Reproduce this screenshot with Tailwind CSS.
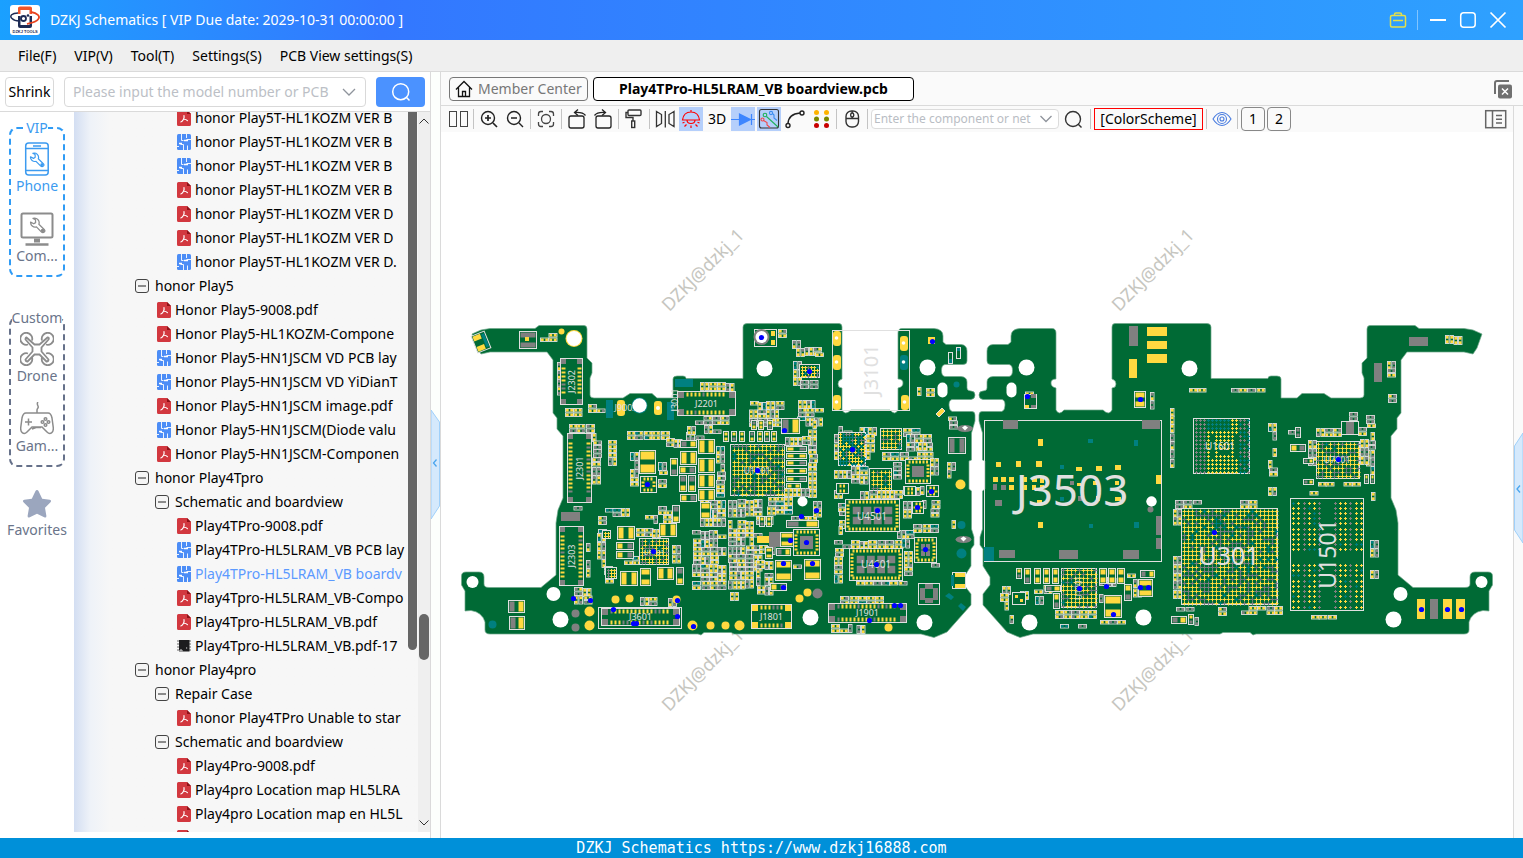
<!DOCTYPE html>
<html lang="en">
<head>
    <meta charset="UTF-8" />
    <meta name="viewport" content="width=device-width, initial-scale=1.0" />
    <title>DZKJ Schematics</title>
    <script src="https://cdn.jsdelivr.net/npm/@tailwindcss/browser@4"></script>
</head>
<body class="h-screen flex flex-col overflow-hidden bg-white text-black text-sm font-['Noto_Sans','Open_Sans',sans-serif]">

<!-- shared icons -->
<svg class="hidden">
    <symbol id="i-pdf" viewBox="0 0 14 16">
        <path d="M1.500 0H10l4 4v10.500a1.500 1.500 0 0 1-1.500 1.500h-11A1.500 1.500 0 0 1 0 14.500v-13A1.500 1.500 0 0 1 1.500 0z" fill="#d2383f"/>
        <path d="M10 0l4 4h-4z" fill="#8e1218"/>
        <path d="M7 5.500c.3 1.700.2 2.600-.6 4C5.500 11 4.800 11.800 3.800 12M6.400 9.300c1.600-.2 3 .2 4 1.300" fill="none" stroke="#fff" stroke-width="1.200" stroke-linecap="round"/>
    </symbol>
    <symbol id="i-pcb" viewBox="0 0 14 16">
        <rect width="14" height="16" rx="1.500" fill="#4c8df6"/>
        <path d="M4.500 0v6.500h2M9.500 0v4M14 5.500h-4.500M3.500 10.500h3V16M10.500 16v-4.500M0 12.500h2" fill="none" stroke="#fff" stroke-width=".9"/>
        <path d="M7 6.500h4M2 9.500h3" fill="none" stroke="#fff" stroke-width="1.500"/>
    </symbol>
    <symbol id="i-chip" viewBox="0 0 14 16">
        <path d="M0 3h14M0 6h14M0 9h14M0 12h14" stroke="#999" stroke-width="1.500"/>
        <rect x="2" y="2" width="10.500" height="11.500" fill="#1d1d1f"/>
        <path d="M3 13.500v-1.500h2v1.500M9 10h1.200" stroke="#ddd" fill="none"/>
    </symbol>
    <symbol id="i-minus" viewBox="0 0 14 14">
        <rect x=".5" y=".5" width="13" height="13" rx="2.500" fill="#f5f5f5" stroke="#444"/>
        <path d="M3 7h8" stroke="#222"/>
    </symbol>
    <symbol id="i-wrench" viewBox="0 0 16 16">
        <path d="M1.500 4.800l3 1.600 1.700-1.100L6.100 2.600 3.800 1.300a4.300 4.300 0 0 1 5.500 5.500l5 4.900a1.700 1.700 0 0 1-2.500 2.500L7 9.300A4.300 4.300 0 0 1 1.500 4.800z" fill="none" stroke="currentColor" stroke-width="1.200" stroke-linejoin="round"/>
        <circle cx="12.800" cy="12.800" r=".7" fill="currentColor"/>
    </symbol>
</svg>

<header class="h-10 shrink-0 flex items-center pl-2.5 pr-[15px] text-white bg-gradient-to-r from-[#1aa0ff] via-[#3377ff] via-25% to-[#2ea1ff]">
    <svg class="size-[30px] mr-2.5" viewBox="0 0 30 30">
        <rect width="30" height="30" rx="3" fill="#fff"/>
        <path d="M8 3q0-1.500 2-1.500h10q2 0 2 1.500v6H8z" fill="#f0552a"/>
        <path d="M8 11h14v10q0 2-2 2H10q-2 0-2-2z" fill="#1d2b55"/>
        <rect x="10.500" y="5" width="9" height="15" fill="#fff"/>
        <path d="M8 8C2 8-1 11 2 13.500c2 2 5 2.500 7 2.500" fill="none" stroke="#1d2b55" stroke-width="1.500"/>
        <path d="M21 7c6 1 10 4 7 7.500-2 2.500-7 3.500-11 4.500" fill="none" stroke="#e8431f" stroke-width="1.800"/>
        <circle cx="13.500" cy="13.500" r="2.500" fill="none" stroke="#1d2b55" stroke-width="1.800"/>
        <circle cx="18" cy="10.500" r="1.300" fill="#1d2b55"/>
        <text x="2.500" y="28.300" font-size="4" font-weight="bold" fill="#1d2b55" font-family="Liberation Sans">DZKJ TOOLS</text>
    </svg>
    <h1>DZKJ Schematics [ VIP Due date: 2029-10-31 00:00:00 ]</h1>
    <div class="ml-auto flex items-center">
        <button aria-label="Toolbox">
            <svg class="size-5" viewBox="0 0 20 20" fill="none" stroke="#e5e04a" stroke-width="1.500"><rect x="2.500" y="5.500" width="15" height="11.500" rx="1.500"/><path d="M6.500 5.500v-1q0-1.500 1.500-1.500h4q1.500 0 1.500 1.500v1M5 10.500h10"/></svg>
        </button>
        <span class="w-px h-5 bg-white/40 ml-[9px] mr-2.5"></span>
        <button class="mr-2.5" aria-label="Minimize">
            <svg class="size-5" viewBox="0 0 20 20" stroke="#fff" stroke-width="2"><path d="M2 10h16"/></svg>
        </button>
        <button class="mr-2.5" aria-label="Maximize">
            <svg class="size-5" viewBox="0 0 20 20" fill="none" stroke="#fff" stroke-width="1.500"><rect x="2.700" y="2.700" width="14.500" height="14.500" rx="3"/></svg>
        </button>
        <button aria-label="Close">
            <svg class="size-5" viewBox="0 0 20 20" stroke="#fff" stroke-width="1.700"><path d="M2.500 2.500l15 15M17.500 2.500l-15 15"/></svg>
        </button>
    </div>
</header>

<nav class="h-8 shrink-0 flex items-center gap-[18px] pl-[18px] bg-[#efefef] border-b border-[#dadada]">
    <button>File(F)</button>
    <button>VIP(V)</button>
    <button>Tool(T)</button>
    <button>Settings(S)</button>
    <button>PCB View settings(S)</button>
</nav>

<div class="flex-1 min-h-0 flex">

    <!-- left pane -->
    <aside class="w-[431px] shrink-0 flex flex-col border-r border-[#dadada]">
        <div class="h-10 shrink-0 flex items-center pl-[5px] border-b border-[#dadada]">
            <button class="h-[30px] w-[49px] border border-[#d9d9d9] rounded-sm">Shrink</button>
            <label class="ml-2.5 h-[30px] w-[302px] flex items-center border border-[#d9d9d9] rounded-sm pl-2 pr-2">
                <input type="text" aria-label="Model number" placeholder="Please input the model number or PCB" class="flex-1 min-w-0 outline-none placeholder:text-[#bcbfc6]" />
                <svg class="w-4 h-4 ml-1.5" viewBox="0 0 16 16" fill="none" stroke="#8f949c" stroke-width="1.300"><path d="M2 5l6 6 6-6"/></svg>
            </label>
            <button class="ml-2.5 h-[30px] w-[49px] flex items-center justify-center rounded-sm bg-[#4b92ff]" aria-label="Search">
                <svg class="size-5" viewBox="0 0 20 20" fill="none" stroke="#fff" stroke-width="1.500"><circle cx="9.700" cy="9.700" r="8"/><path d="M15.300 15.300l3.200 3.200"/></svg>
            </button>
        </div>

        <div class="flex-1 min-h-0 flex pb-1.5">
            <div class="w-[74px] shrink-0 flex flex-col items-center pt-1.5 text-[#6a748a]">
                <fieldset class="w-14 h-[159px] border-2 border-dashed border-[#2f9bf5] rounded-lg flex flex-col items-center">
                    <legend class="mx-auto leading-5 text-[#3c9bf0]">VIP</legend>
                    <button class="mt-1 flex flex-col items-center text-[#3c9bf0]">
                        <svg class="size-[34px]" viewBox="0 0 34 34" fill="none" stroke="currentColor" stroke-width="1.500"><rect x="5.700" y="1" width="22.500" height="32" rx="3"/><path d="M5.700 6.500h22.500M5.700 28.500h22.500M13 4h8"/><use href="#i-wrench" x="9" y="10" width="16" height="16"/></svg>
                        <span class="leading-5">Phone</span>
                    </button>
                    <button class="mt-4 flex flex-col items-center">
                        <svg class="size-[34px] text-[#8c8c8c]" viewBox="0 0 34 34" fill="none" stroke="currentColor" stroke-width="2"><rect x="1.500" y="1.500" width="31" height="24" rx="1.500"/><path d="M14 28.500h6" stroke-width="4"/><path d="M5.500 32.500h23" stroke-width="2.500"/><use href="#i-wrench" x="9" y="5" width="17" height="17"/></svg>
                        <span class="leading-5">Com...</span>
                    </button>
                </fieldset>
                <fieldset class="mt-[31px] w-14 h-[159px] border-2 border-dashed border-[#66718a] rounded-lg flex flex-col items-center">
                    <legend class="mx-auto leading-5">Custom</legend>
                    <button class="mt-1 flex flex-col items-center">
                        <svg class="size-[34px] text-[#8c8c8c]" viewBox="0 0 34 34" fill="none" stroke="currentColor" stroke-width="1.800"><path d="M12 8.500A6 6 0 1 0 8 12.500M22 8.500a6 6 0 1 1 4 4M12 25.500A6 6 0 1 1 8 21.500M22 25.500a6 6 0 1 0 4-4M6.500 5.500l8 7h5l8-7q2 0 1 2l-7 8v4l7 8q0 2-2 2l-7-7h-5l-7 7q-2 0-2-2l7-8v-4l-7-8q0-2 1-2z"/></svg>
                        <span class="leading-5">Drone</span>
                    </button>
                    <button class="mt-4 flex flex-col items-center">
                        <svg class="size-[34px] text-[#8c8c8c]" viewBox="0 0 34 34" fill="none" stroke="currentColor" stroke-width="1.500"><path d="M17 11V8c0-2 2-2 1-4s-1-3 0-4M6 11h22q3 0 4 5l1.200 9c.8 6-3.200 8-6.200 5l-5-5H12l-5 5c-3 3-7 1-6.200-5L2 16q1-5 4-5zM8.500 16.500v7M5 20h7M12 27l4-1.500h5" /><circle cx="25.500" cy="17" r="1.300"/><circle cx="25.500" cy="23" r="1.300"/><circle cx="22.500" cy="20" r="1.300"/><circle cx="28.500" cy="20" r="1.300"/></svg>
                        <span class="leading-5">Gam...</span>
                    </button>
                </fieldset>
                <button class="mt-[21px] flex flex-col items-center">
                    <svg class="size-8" viewBox="0 0 32 32" fill="#9ba6be"><path d="M16 2q1 0 1.500 1l3.700 7.800 7.500 1q2.300.6.800 2.500l-5.500 5.500 1.400 8.200q0 2.200-2.200 1.300L16 25.700l-7.200 3.600q-2.200.9-2.200-1.300L8 19.800l-5.500-5.500q-1.500-1.900.8-2.500l7.500-1L14.500 3q.5-1 1.500-1z"/></svg>
                    <span class="leading-5">Favorites</span>
                </button>
            </div>

            <div class="relative flex-1 min-w-0 overflow-hidden bg-[#f7f7f7] bg-gradient-to-r from-[#d3def2] via-[#eef2f8] via-[16px] to-[#f7f7f7] to-[36px]">
                <ul id="tree" class="-mt-1.5 w-[332px] overflow-hidden whitespace-nowrap"></ul>
                <div class="absolute top-0 right-px w-[9px] h-[538px] rounded-b-full bg-[#666]"></div>
            </div>

            <div class="relative w-3 shrink-0 flex flex-col justify-between items-center py-1 bg-[#efefef]">
                <svg class="w-2.5 h-2.5" viewBox="0 0 10 10" fill="none" stroke="#333"><path d="M.5 7.500L5 3l4.500 4.500"/></svg>
                <div class="absolute top-[502px] right-px w-[10px] h-[46px] rounded-full bg-[#666]"></div>
                <svg class="w-2.5 h-2.5" viewBox="0 0 10 10" fill="none" stroke="#333"><path d="M.5 2.500L5 7l4.500-4.500"/></svg>
            </div>
        </div>
    </aside>

    <div class="w-[10px] shrink-0 flex items-center border-r border-[#dadada] bg-[#fcfffc]">
        <button class="mt-5" aria-label="Collapse the list">
            <svg class="w-[9px] h-[110px]" viewBox="0 0 9 110"><path d="M0 0l8.500 12v84L0 109z" fill="#d5e9fc" stroke="#9fd0fa"/><path d="M5.500 49.500l-3 3.500 3 3.500" fill="none" stroke="#4aa5ee" stroke-width="1.300"/></svg>
        </button>
    </div>

    <!-- board view -->
    <main class="flex-1 min-w-0 flex flex-col">
        <div class="h-[34px] shrink-0 flex items-center pl-2 pr-2.5 gap-[5px] bg-[#fafafa] border-b border-[#dadada]">
            <button class="h-6 w-[139px] flex items-center pl-1 gap-1 border border-[#777] rounded-sm text-[#777]">
                <svg class="size-5" viewBox="0 0 20 20" fill="none" stroke="#111" stroke-width="1.300"><path d="M2 10.500L10 2.500l8 8M4.500 8.500v9h11v-9M8.500 17.500v-5h3v5"/></svg>
                Member Center
            </button>
            <button class="h-6 w-[321px] bg-white border border-black rounded-sm font-bold">Play4TPro-HL5LRAM_VB boardview.pcb</button>
            <button class="ml-auto" aria-label="Close all tabs">
                <svg class="size-5" viewBox="0 0 20 20"><path d="M2 15V4q0-2 2-2h12" fill="none" stroke="#707070" stroke-width="2"/><rect x="5" y="5.500" width="14" height="14" rx="2" fill="#707070"/><path d="M9 9.500l6 6M15 9.500l-6 6" stroke="#fff" stroke-width="1.500"/></svg>
            </button>
        </div>

        <div class="flex-1 min-h-0 flex">
            <div class="flex-1 min-w-0 flex flex-col">
                <div class="h-[26px] shrink-0 flex items-center gap-0.5 pl-[5px] pr-[5px] bg-[#fafafa]">
                    <button class="size-6" aria-label="Split view"><svg viewBox="0 0 24 24" fill="none" stroke="#444"><rect x="3.500" y="4.500" width="7" height="15"/><rect x="14.500" y="4.500" width="7" height="15"/></svg></button>
                    <span class="w-px h-5 mx-px bg-[#c4c4c4]"></span>
                    <button class="size-6" aria-label="Zoom in"><svg viewBox="0 0 24 24" fill="none" stroke="#222" stroke-width="1.400"><circle cx="11" cy="11" r="6.500"/><path d="M8 11h6M11 8v6M16 16l4 4" stroke-width="1.700"/></svg></button>
                    <button class="size-6" aria-label="Zoom out"><svg viewBox="0 0 24 24" fill="none" stroke="#222" stroke-width="1.400"><circle cx="11" cy="11" r="6.500"/><path d="M8 11h6M16 16l4 4"/></svg></button>
                    <span class="w-px h-5 mx-px bg-[#c4c4c4]"></span>
                    <button class="size-6" aria-label="Fit to window"><svg viewBox="0 0 24 24" fill="none" stroke="#444" stroke-width="1.300"><circle cx="12" cy="12" r="4.500"/><path d="M4.500 9V7q0-2.500 2.500-2.500h2M15 4.500h2q2.500 0 2.500 2.500v2M19.500 15v2q0 2.500-2.500 2.500h-2M9 19.500H7q-2.500 0-2.500-2.500v-2"/></svg></button>
                    <span class="w-px h-5 mx-px bg-[#c4c4c4]"></span>
                    <button class="size-6" aria-label="Rotate left"><svg viewBox="0 0 24 24" fill="none" stroke="#222" stroke-width="1.300"><rect x="4" y="9" width="15" height="12" rx="2"/><path d="M20.500 8.500Q18 5 10 5.500M13 2.500l-3.500 3 3.500 3"/></svg></button>
                    <button class="size-6" aria-label="Rotate right"><svg viewBox="0 0 24 24" fill="none" stroke="#222" stroke-width="1.300"><rect x="5" y="9" width="15" height="12" rx="2"/><path d="M3.500 8.500Q6 5 14 5.500M11 2.500l3.500 3-3.500 3"/></svg></button>
                    <span class="w-px h-5 mx-px bg-[#c4c4c4]"></span>
                    <button class="size-6" aria-label="Paint"><svg viewBox="0 0 24 24" fill="none" stroke="#333" stroke-width="1.400"><rect x="6" y="3" width="13" height="5.500" rx="1"/><path d="M6 5.500H4v5h7v3.500"/><rect x="9.700" y="14" width="3" height="6.500"/></svg></button>
                    <span class="w-px h-5 mx-px bg-[#c4c4c4]"></span>
                    <button class="size-6" aria-label="Mirror"><svg viewBox="0 0 24 24" fill="none" stroke="#333" stroke-width="1.300"><path d="M3.500 4.500l5 3v9l-5 3zM21 4.500l-5 3v9l5 3zM12.300 4v16.500"/></svg></button>
                    <button class="size-6 bg-[#b5cffb]" aria-label="Highlight"><svg viewBox="0 0 24 24" fill="none" stroke="#f00" stroke-width="1.200"><path d="M3.500 13Q4.500 5 12 5t8.500 8zM12 3v2M8 13q0 3.500 4 3.500t4-3.500M3.500 16l2-.8M5.500 19.500l2-2M12 21v-2.500M18.500 19.500l-2-2M20.500 16l-2-.8"/></svg></button>
                    <button class="size-6">3D</button>
                    <button class="size-6 bg-[#b5cffb]" aria-label="Diode"><svg viewBox="0 0 24 24" stroke="#3d86ff" fill="#3d86ff" stroke-width="1.200"><path d="M0 12.500h24M20.500 7v11"/><path d="M8.500 7l11 5.500-11 5.500z"/></svg></button>
                    <button class="size-6 bg-[#b5cffb]" aria-label="Nets"><svg viewBox="0 0 24 24" fill="none" stroke-width="1.100"><rect x="2.500" y="2.500" width="19" height="18.500" rx="2" stroke="#333"/><g stroke="#20b15a"><circle cx="8" cy="8" r="1.800"/><path d="M9.500 9.500L21 20"/></g><g stroke="#3b8cf0"><circle cx="14" cy="6" r="1.600"/><path d="M15.500 6.500l1.500 1.500v3l3 2.500"/></g><g stroke="#f04a4a"><circle cx="5.500" cy="12.500" r="1.500"/><path d="M6.500 13.500l3.500 2v2.500l3 2.500"/></g></svg></button>
                    <button class="size-6" aria-label="Curve"><svg viewBox="0 0 24 24" fill="none" stroke="#222" stroke-width="1.400"><circle cx="5" cy="18.500" r="2"/><circle cx="19" cy="6" r="2"/><path d="M5 16.500Q5.500 7 17 6"/></svg></button>
                    <button class="size-6" aria-label="Pins"><svg viewBox="0 0 24 24"><g fill="#ffb400"><circle cx="7.500" cy="5.500" r="2.500"/><circle cx="17.500" cy="5.500" r="2.500"/></g><g fill="#7c8a00"><circle cx="7.500" cy="12" r="2.500"/><circle cx="17.500" cy="12" r="2.500"/></g><g fill="#c80000"><circle cx="7.500" cy="18.500" r="2.500"/><circle cx="17.500" cy="18.500" r="2.500"/></g></svg></button>
                    <span class="w-px h-5 mx-px bg-[#c4c4c4]"></span>
                    <button class="size-6" aria-label="Mouse mode"><svg viewBox="0 0 24 24" fill="none" stroke="#333" stroke-width="1.400"><rect x="6" y="4" width="12.500" height="16" rx="5.500"/><path d="M6 11.500h12.500M12.200 4v2M12.200 10v1.500"/><rect x="10.700" y="6" width="3" height="4" rx="1.500"/></svg></button>
                    <span class="w-px h-5 mx-px bg-[#c4c4c4]"></span>
                    <label class="h-5 w-[188px] flex items-center pl-0.5 pr-1 border border-[#dcdcdc] rounded-sm bg-white text-xs">
                        <input type="text" aria-label="Component or net" placeholder="Enter the component or net" class="flex-1 min-w-0 outline-none placeholder:text-[#b9bdc4]" />
                        <svg class="size-4 ml-1" viewBox="0 0 16 16" fill="none" stroke="#8f949c" stroke-width="1.300"><path d="M2.500 5L8 10.500 13.500 5"/></svg>
                    </label>
                    <button class="size-6 ml-0.5" aria-label="Find"><svg viewBox="0 0 24 24" fill="none" stroke="#333" stroke-width="1.400"><circle cx="10" cy="12" r="7.500"/><path d="M15 17l3.500 3.500"/></svg></button>
                    <span class="w-px h-5 mx-px bg-[#c4c4c4]"></span>
                    <button class="h-[22px] w-[109px] border border-[#f00] leading-5">[ColorScheme]</button>
                    <span class="w-px h-5 mx-px bg-[#c4c4c4]"></span>
                    <button class="size-6" aria-label="Visibility"><svg viewBox="0 0 24 24" fill="none" stroke="#4a7de0" stroke-width="1.100"><path d="M3 12q4-6.500 9-6.500T21 12q-4 6.500-9 6.500T3 12z"/><circle cx="12" cy="12" r="4.500"/><circle cx="12" cy="12" r="2"/></svg></button>
                    <span class="w-px h-5 mx-px bg-[#c4c4c4]"></span>
                    <button class="size-6 border border-[#888] rounded">1</button>
                    <button class="size-6 border border-[#888] rounded">2</button>
                    <button class="size-6 ml-auto" aria-label="Side panel"><svg viewBox="0 0 24 24" fill="none" stroke="#666" stroke-width="1.500"><rect x="1.700" y="3.700" width="20" height="17"/><path d="M8.500 3.700v17M12 8.500h6M12 12.300h6M12 16h6"/></svg></button>
                </div>
                <svg id="board" class="flex-1 min-h-0 w-full font-['Noto_Sans',sans-serif]" viewBox="441 132 1072 706"></svg>
            </div>
            <div class="w-[10px] shrink-0 flex items-center border-l border-[#dadada] bg-[#fafafa]">
                <button class="mt-8" aria-label="Expand the panel">
                    <svg class="w-[9px] h-[110px]" viewBox="0 0 9 110"><path d="M9 0L.5 13v84L9 110z" fill="#d5e9fc" stroke="#9fd0fa"/><path d="M6 52.500l-3 3.500 3 3.500" fill="none" stroke="#4aa5ee" stroke-width="1.300"/></svg>
                </button>
            </div>
        </div>
    </main>
</div>

<footer class="h-5 shrink-0 flex items-center justify-center pt-0.5 bg-[#0090d9] text-white text-[15px] font-['DejaVu_Sans_Mono',monospace]">DZKJ Schematics https://www.dzkj16888.com</footer>

<script>
    // file tree: [kind, depth, name, active]
    const files = [
        ['pdf', 3, 'honor Play5T-HL1KOZM VER B'],
        ['pcb', 3, 'honor Play5T-HL1KOZM VER B'],
        ['pcb', 3, 'honor Play5T-HL1KOZM VER B'],
        ['pdf', 3, 'honor Play5T-HL1KOZM VER B'],
        ['pdf', 3, 'honor Play5T-HL1KOZM VER D'],
        ['pdf', 3, 'honor Play5T-HL1KOZM VER D'],
        ['pcb', 3, 'honor Play5T-HL1KOZM VER D.'],
        ['minus', 1, 'honor Play5'],
        ['pdf', 2, 'Honor Play5-9008.pdf'],
        ['pdf', 2, 'Honor Play5-HL1KOZM-Compone'],
        ['pcb', 2, 'Honor Play5-HN1JSCM VD PCB lay'],
        ['pcb', 2, 'Honor Play5-HN1JSCM VD YiDianT'],
        ['pdf', 2, 'Honor Play5-HN1JSCM image.pdf'],
        ['pcb', 2, 'Honor Play5-HN1JSCM(Diode valu'],
        ['pdf', 2, 'Honor Play5-HN1JSCM-Componen'],
        ['minus', 1, 'honor Play4Tpro'],
        ['minus', 2, 'Schematic and boardview'],
        ['pdf', 3, 'Play4TPro-9008.pdf'],
        ['pcb', 3, 'Play4TPro-HL5LRAM_VB PCB lay'],
        ['pcb', 3, 'Play4TPro-HL5LRAM_VB boardv', true],
        ['pdf', 3, 'Play4Tpro-HL5LRAM_VB-Compo'],
        ['pdf', 3, 'Play4Tpro-HL5LRAM_VB.pdf'],
        ['chip', 3, 'Play4Tpro-HL5LRAM_VB.pdf-17'],
        ['minus', 1, 'honor Play4pro'],
        ['minus', 2, 'Repair Case'],
        ['pdf', 3, 'honor Play4TPro Unable to star'],
        ['minus', 2, 'Schematic and boardview'],
        ['pdf', 3, 'Play4Pro-9008.pdf'],
        ['pdf', 3, 'Play4pro Location map HL5LRA'],
        ['pdf', 3, 'Play4pro Location map en HL5L'],
        ['pdf', 3, '']
    ];
    const indent = { 1: 'pl-[61px]', 2: 'pl-[81px]', 3: 'pl-[101px]' };
    document.getElementById('tree').innerHTML = files.map(([kind, depth, name, active]) => `
        <li class="h-6 ${indent[depth]}">
            <a href="#" class="h-6 flex items-center ${active ? 'text-[#5c9aff]' : 'text-black'}">
                <svg class="${kind === 'minus' ? 'size-3.5 mr-1.5' : 'w-3.5 h-4 ml-0.5 mr-1'} shrink-0"><use href="#i-${kind}"/></svg>${name}
            </a>
        </li>`).join('');

    // ---- board drawing ----
    const Y = '#ffd940', G = '#808080', T = '#008080', W = '#e0e0e0', GR = '#006a35', B = '#0000ff';
    const C = { Y, G, T };
    const out = [];
    let seed = 7;
    function rnd() {
        seed = (seed * 1103515245 + 12345) % 2147483648;
        return seed / 2147483648;
    }
    function pickColor() {
        const r = rnd();
        return r < 0.62 ? Y : r < 0.95 ? G : T;
    }
    function rect(x, y, w, h, fill) {
        out.push(`<rect x="${x}" y="${y}" width="${w}" height="${h}" fill="${fill}"/>`);
    }
    function box(x, y, w, h, fill = 'none') {
        out.push(`<rect x="${x}" y="${y}" width="${w}" height="${h}" fill="${fill}" stroke="${W}"/>`);
    }
    function circle(x, y, r, fill) {
        out.push(`<circle cx="${x}" cy="${y}" r="${r}" fill="${fill}"/>`);
    }
    function label(x, y, size, text, vertical) {
        const t = vertical ? ` transform="rotate(-90 ${x} ${y})"` : '';
        out.push(`<text x="${x}" y="${y + size * 0.36}" font-size="${size}" text-anchor="middle" fill="${W}"${t}>${text}</text>`);
    }
    // two-pad part, pads on the long ends unless dir says otherwise
    function part(x, y, w, h, colors = 'YY', dir) {
        const vertical = dir ? dir === 'v' : h > w;
        box(x, y, w, h, GR);
        const a = C[colors[0]], b = C[colors[1]];
        if (vertical) {
            const p = Math.round((h - 2) * 0.36);
            rect(x + 1, y + 1, w - 2, p, a);
            rect(x + 1, y + h - 1 - p, w - 2, p, b);
        } else {
            const p = Math.round((w - 2) * 0.36);
            rect(x + 1, y + 1, p, h - 2, a);
            rect(x + w - 1 - p, y + 1, p, h - 2, b);
        }
    }
    // area filled with small passives
    function cluster(x, y, w, h, fill = 0.88) {
        const s = 3.5, L = 8;
        for (let cy = y; cy <= y + Math.max(h - 4, 0); cy += L + 0.5) {
            for (let cx = x; cx <= x + Math.max(w - 4, 0); cx += L + 0.5) {
                const horizontal = h < 6 ? true : w < 6 ? false : rnd() > 0.5;
                const dx = Math.round(rnd()), dy = Math.round(rnd());
                for (let k = 0; k < 2; k++) {
                    if (rnd() > fill) continue;
                    const px = cx + (horizontal ? dx : k * 4.5), py = cy + (horizontal ? k * 4.5 : dy);
                    const pw = horizontal ? L : s, ph = horizontal ? s : L;
                    if (px + pw > x + w + 4 || py + ph > y + h + 4) continue;
                    out.push(`<rect x="${px}" y="${py}" width="${pw}" height="${ph}" fill="${GR}" stroke="${W}" stroke-width=".9"/>`);
                    const c1 = pickColor(), c2 = rnd() > 0.4 ? c1 : pickColor();
                    if (horizontal) {
                        rect(px + 0.5, py + 0.5, 2.7, s - 1, c1);
                        rect(px + L - 3.2, py + 0.5, 2.7, s - 1, c2);
                    } else {
                        rect(px + 0.5, py + 0.5, s - 1, 2.7, c1);
                        rect(px + 0.5, py + L - 3.2, s - 1, 2.7, c2);
                    }
                }
            }
        }
    }
    // ball grid
    function bga(x, y, w, h, pitch, size, color = pickColor, skip = () => false) {
        box(x, y, w, h, GR);
        const nx = Math.floor((w - 3) / pitch), ny = Math.floor((h - 3) / pitch);
        const ox = x + (w - nx * pitch) / 2, oy = y + (h - ny * pitch) / 2;
        for (let j = 0; j <= ny; j++) {
            for (let i = 0; i <= nx; i++) {
                if (skip(i, j, nx, ny)) continue;
                const px = Math.round(ox + i * pitch) + 0.5, py = Math.round(oy + j * pitch) + 0.5;
                out.push(`<path d="M${px - size} ${py}h${size * 2}M${px} ${py - size}v${size * 2}" stroke="${color(i, j, nx, ny)}"/>`);
            }
        }
    }
    // connector with pin rows on the two long sides
    function connector(x, y, w, h, name, corner = G) {
        box(x, y, w, h, GR);
        if (h > w) {
            for (let p = y + 9; p < y + h - 9; p += 4) {
                rect(x + 1, p, 4, 2, rnd() > 0.2 ? Y : G);
                rect(x + w - 5, p, 4, 2, rnd() > 0.2 ? Y : G);
            }
            [[x, y], [x + w - 6, y], [x, y + h - 6], [x + w - 6, y + h - 6]].forEach(([a, b]) => rect(a + 0.5, b + 0.5, 5, 5, corner));
            label(x + w / 2, y + h / 2, 9, name, true);
        } else {
            for (let p = x + 9; p < x + w - 9; p += 4) {
                rect(p, y + 1, 2, 4, rnd() > 0.2 ? Y : G);
                rect(p, y + h - 5, 2, 4, rnd() > 0.2 ? Y : G);
            }
            [[x, y], [x + w - 7, y], [x, y + h - 7], [x + w - 7, y + h - 7]].forEach(([a, b]) => rect(a + 0.5, b + 0.5, 6, 6, corner));
            label(x + w / 2, y + h / 2, 9, name);
        }
    }
    // leadless package with pads around the edge
    function qfn(x, y, w, h, cx, cy, edge = Y) {
        box(x, y, w, h, GR);
        for (let p = x + 3; p < x + w - 3; p += 3.5) {
            rect(p, y + 1, 2, 3, edge);
            rect(p, y + h - 4, 2, 3, edge);
        }
        for (let p = y + 5; p < y + h - 5; p += 3.5) {
            rect(x + 1, p, 3, 2, edge);
            rect(x + w - 4, p, 3, 2, edge);
        }
        const gap = cx > 2 ? 2.500 : 1;
        const gw = (w - 12) / cx, gh = (h - 12) / cy;
        for (let i = 0; i < cx; i++) {
            for (let j = 0; j < cy; j++) rect(x + 6 + i * gw + gap / 2, y + 6 + j * gh + gap / 2, gw - gap, gh - gap, G);
        }
    }

    // watermarks sit below the board
    [[703, 270], [1153, 270], [703, 670], [1153, 670]].forEach(([x, y]) =>
        out.push(`<text x="${x}" y="${y + 6}" font-size="18" text-anchor="middle" fill="#c6c6c0" font-family="Noto Sans" transform="rotate(-45 ${x} ${y})">DZKJ@dzkj_1</text>`));

    // outline, mirrored for the back side
    const outline = 'M472 334L481 330L490 328.500H535L539 325.500H584Q587 325.500 587 329V358L592 363V373L590 378V395Q590 398 594 398H623L630 393.500H652L657 398H673V379Q673 376 677 376H683Q686 376 686 378.500H743V327Q743 323.500 747 323.500H839Q842 323.500 842 327V379Q838 380 838 384T842 388V410Q845 416 851 410H890Q895 416 898 410V388Q903 387 903 383T898 379V333Q898 328.500 902 328.500H934Q943 329 943 336V342L946 344.500H961Q967 345 967 351V361Q967 364.500 963 364.500H945Q941.500 365 941.500 370.500T945 376.500H961Q967 377 967 382V388Q967 391 971 391Q975 391 975 395T971 399.500H952Q949 400 949 405T952 411.500H972Q975 411.500 975 415V421L971.500 433V460L969 461V489L971.500 491V529L974 537V545L971 549V566L964 577V585L971 594V605L947 632L934 637.500L921 634H734L731 632.500H704L701 635L698 634H490Q485 634 485 630V622Q482 612 471 610.500L465 611V591L461.500 585V576Q461.500 572 466 572H479Q484 572 484 577V584Q484 587.500 489 587.500H541L556 575V523L558 510L563 498V436L557 429V418L553 413V360L547 352H490L481 354L477 348Z';
    let holes = '';
    [[472.5, 582, 6], [553.5, 594, 7], [560.5, 619.5, 8], [764.5, 368.5, 8], [927.5, 367.5, 8], [802.5, 501.5, 5], [810.5, 617.5, 8], [924.5, 622.5, 8]]
        .forEach(([x, y, r]) => holes += `<circle cx="${x}" cy="${y}" r="${r}"/>`);
    out.push(`<defs><g id="side"><path d="${outline}" fill="${GR}" stroke="#6fa88a" stroke-width=".7"/><g fill="#fff">${holes}<rect x="937.5" y="382.5" width="10" height="15" rx="5"/></g></g></defs>`);
    out.push('<use href="#side"/><use href="#side" transform="translate(1954 0) scale(-1 1)"/>');

    // front side: passives
    [[540, 333, 16, 8], [557, 361, 3, 32], [564, 408, 16, 4], [587, 404, 14, 5], [568, 424, 24, 5], [592, 432, 6, 52],
     [608, 440, 12, 24], [626, 431, 42, 5], [686, 431, 16, 7], [630, 452, 6, 36], [658, 462, 8, 24], [665, 438, 14, 8],
     [564, 506, 14, 2], [604, 508, 24, 8], [597, 516, 10, 22], [597, 542, 10, 38], [645, 515, 22, 10], [657, 506, 14, 8], [586, 543, 2, 42],
     [624, 556, 16, 10], [635, 528, 22, 8], [672, 545, 4, 20], [604, 566, 6, 14], [574, 587, 16, 14], [640, 597, 14, 8], [668, 598, 4, 6],
     [700, 382, 38, 6], [694, 416, 36, 4], [687, 425, 36, 10], [778, 329, 6, 12], [792, 339, 4, 12], [796, 347, 22, 12], [793, 360, 4, 24], [814, 348, 6, 12], [800, 380, 18, 4],
     [749, 401, 36, 22], [798, 400, 20, 8], [797, 408, 22, 14], [808, 420, 11, 76], [785, 436, 28, 8], [716, 446, 12, 52],
     [700, 500, 28, 26], [728, 499, 34, 20], [767, 497, 28, 20], [692, 530, 30, 58], [728, 520, 30, 66], [756, 516, 14, 10], [784, 488, 30, 8],
     [756, 560, 14, 34], [758, 545, 14, 12], [793, 560, 10, 12], [790, 516, 28, 10], [813, 500, 6, 20],
     [834, 426, 42, 6], [834, 434, 4, 32], [866, 434, 12, 30], [834, 469, 16, 12], [834, 490, 10, 6], [851, 466, 16, 20], [860, 490, 40, 8],
     [903, 428, 18, 5], [906, 434, 22, 16], [882, 452, 52, 5], [892, 462, 12, 20], [918, 442, 10, 6], [930, 458, 5, 20],
     [903, 486, 34, 8], [903, 500, 8, 16], [922, 500, 17, 18], [838, 503, 6, 30], [834, 525, 8, 8], [834, 540, 68, 6], [834, 548, 12, 32],
     [897, 530, 14, 18], [904, 550, 10, 26], [855, 581, 50, 2], [913, 524, 26, 8], [930, 563, 6, 3], [947, 461, 4, 20], [947, 520, 8, 8],
     [917, 386, 10, 10], [925, 388, 8, 5], [948, 412, 6, 20], [840, 596, 46, 5], [831, 624, 36, 6], [866, 624, 8, 6], [730, 592, 10, 8]
    ].forEach(([x, y, w, h]) => cluster(x + 0.5, y + 0.5, w, h));

    // larger passives
    [[680.5, 451.5, 16, 13, 'YY', 'h'], [698.5, 439.5, 16, 14, 'YY', 'h'], [698.5, 458.5, 16, 14, 'YY', 'h'], [698.5, 474.5, 16, 13, 'YY', 'h'], [698.5, 489.5, 16, 11, 'YY', 'h'],
     [700.5, 502.5, 10, 16, 'YY'], [680.5, 440.5, 16, 7, 'GY'], [679.5, 466.5, 16, 7, 'YG'], [679.5, 475.5, 7, 16, 'GY'], [688.5, 475.5, 7, 16, 'GY'], [680.5, 494.5, 16, 7, 'YG'],
     [670.5, 458.5, 7, 17, 'YG'], [672.5, 505.5, 7, 17, 'GY'], [639.5, 450.5, 16, 23, 'YY'], [617.5, 526.5, 17, 13, 'YY'], [616.5, 542.5, 17, 7, 'YG'], [616.5, 551.5, 17, 7, 'YG'],
     [620.5, 571.5, 17, 14, 'YY', 'h'], [640.5, 568.5, 10, 17, 'YY'], [657.5, 567.5, 16, 12, 'YY'], [659.5, 523.5, 17, 13, 'YY'], [676.5, 567.5, 7, 17, 'GY'],
     [519.5, 331.5, 17, 17, 'GG', 'v'], [508.5, 600.5, 16, 12, 'GY'], [509.5, 616.5, 15, 13, 'GY'],
     [723.5, 431.5, 5, 10, 'YY'], [731.5, 431.5, 5, 10, 'YG'], [739.5, 431.5, 5, 10, 'YY'], [749.5, 431.5, 5, 10, 'GY'], [757.5, 431.5, 5, 10, 'YY'], [764.5, 431.5, 5, 10, 'YG'], [771.5, 431.5, 5, 10, 'YY'],
     [751.5, 420.5, 5, 9, 'GY'], [758.5, 420.5, 5, 9, 'YY'], [767.5, 420.5, 5, 9, 'YG'],
     [786.5, 446.5, 20, 5, 'YG'], [786.5, 453.5, 20, 5, 'YY'], [786.5, 460.5, 20, 5, 'YG'], [786.5, 468.5, 20, 5, 'YY'], [786.5, 476.5, 20, 5, 'YG'], [786.5, 483.5, 14, 5, 'YY'],
     [786.5, 520.5, 32, 7, 'GY'], [759.5, 516.5, 5, 10, 'YG'], [766.5, 516.5, 5, 10, 'YY'], [765.5, 547.5, 7, 11, 'YY'], [776.5, 548.5, 14, 7, 'GY'],
     [775.5, 560.5, 16, 20, 'YY'], [804.5, 559.5, 16, 20, 'YY'], [770.5, 583.5, 16, 7, 'YG'], [781.5, 418.5, 18, 15, 'GY'], [948.5, 437.5, 17, 16, 'GG']
    ].forEach(p => part(...p));
    rect(757, 536, 12, 7, Y);
    rect(769, 532, 11, 15, G);
    part(780.5, 532.5, 13, 14, 'YY');
    rect(561, 512, 19, 9, G);
    rect(525, 337, 4, 4, Y);
    rect(606, 400, 7, 18, T);
    rect(667, 402, 7, 18, T);
    rect(675, 379, 18, 8, T);
    out.push(`<g transform="rotate(-22 481 342)"><rect x="474" y="333" width="14" height="18" fill="${GR}" stroke="${W}"/><rect x="475" y="334" width="8" height="5" fill="${Y}"/><rect x="475" y="345" width="8" height="5" fill="${Y}"/><rect x="484" y="335" width="3" height="14" fill="${T}"/></g>`);

    // ball grids and packages
    bga(639.5, 538.5, 29, 26, 3.5, 2);
    bga(602.5, 530.5, 8, 8, 3, 1.5);
    bga(605.5, 567.5, 11, 11, 3, 1.5);
    bga(799.5, 364.5, 20, 13, 3, 1.5);
    bga(730.5, 444.5, 54, 51, 4, 2);
    bga(838.5, 432.5, 27, 33, 3, 1.5, () => rnd() < 0.35 ? T : rnd() < 0.6 ? Y : G);
    bga(880.5, 428.5, 21, 21, 4, 2);
    bga(869.5, 468.5, 22, 22, 4, 2);
    qfn(640.5, 476.5, 16, 16, 1, 1);
    qfn(905.5, 459.5, 25, 24, 1, 1);
    qfn(793.5, 529.5, 26, 26, 1, 1);
    qfn(845.5, 499.5, 54, 32, 4, 2);
    qfn(849.5, 548.5, 53, 32, 4, 2);
    qfn(914.5, 537.5, 22, 25, 2, 2);
    qfn(904.5, 486.5, 11, 9, 1, 1);
    qfn(926.5, 485.5, 12, 11, 1, 1);
    qfn(912.5, 501.5, 11, 12, 1, 1);
    qfn(836.5, 483.5, 12, 10, 1, 1);
    box(918.5, 583.5, 21, 21, GR);
    [[920, 588], [933, 588], [925, 584], [925, 598]].forEach(([x, y], i) => rect(x, y, i < 2 ? 5 : 8, i < 2 ? 12 : 5, G));
    box(952.5, 572.5, 13, 16, GR);
    rect(955, 573, 10, 4, Y);
    rect(955, 584, 10, 4, Y);
    rect(951, 575, 3, 11, T);
    label(757, 471, 9, 'U1201');
    label(654, 552, 7, 'U1701');
    label(872, 516, 10, 'U4501');
    label(876, 564, 10, 'U4601');

    // connectors
    connector(560.5, 358.5, 22, 46, 'J2302');
    connector(567.5, 433.5, 24, 69, 'J2301');
    connector(559.5, 526.5, 24, 59, 'J2303');
    connector(677.5, 391.5, 58, 24, 'J2201');
    box(598.5, 607.5, 83, 21);
    connector(601.5, 608.5, 78, 17, 'J3601');
    connector(751.5, 604.5, 40, 24, 'J1801', Y);
    connector(828.5, 603.5, 78, 19, 'J1901');
    label(675, 400, 9, 'J3001', true);

    // J3101 shield
    box(832.5, 330.5, 77, 80);
    [[833, 331, Y], [833, 355, Y], [833, 395, Y], [900, 336, Y], [900, 355, T], [901, 395, Y]].forEach(([x, y, c]) => {
        out.push(`<rect x="${x}" y="${y}" width="8" height="15" rx="3" fill="${c}"/>`);
        circle(x + 3.5, y + 7, 1.8, '#fff');
    });
    label(871, 370, 20, 'J3101', true);

    // screw hole rings and test points
    circle(574, 338.5, 8.5, Y);
    circle(574, 338.5, 7.5, '#fff');
    out.push(`<rect x="617" y="400" width="8" height="16" rx="3" fill="${Y}"/><rect x="654" y="401" width="8" height="14" rx="3" fill="${Y}"/>`);
    label(626, 408, 9, 'J9002');
    circle(639.5, 405.5, 8, T);
    circle(639.5, 405.5, 7.2, '#fff');
    circle(658, 408, 2, '#fff');
    box(754.5, 329.5, 22, 17, GR);
    circle(761.5, 337, 8, G);
    circle(761.5, 337, 6, '#fff');
    rect(771, 331, 4, 5, Y);
    rect(771, 340, 4, 5, Y);
    [[561.5, 331.5, 3, Y], [615.5, 599.5, 4, Y], [629.5, 598.5, 4, Y], [676.5, 599.5, 4, Y], [589.5, 611.5, 5, Y], [589.5, 625.5, 5, Y], [575.5, 613.5, 4, G], [575.5, 627.5, 4, G],
     [692.5, 625.5, 5, Y], [710.5, 625.5, 4, Y], [725.5, 625.5, 4, Y], [739.5, 625.5, 5, Y], [799.5, 598.5, 4, Y], [807.5, 592.5, 4, Y], [817.5, 593.5, 5, G], [888.5, 627.5, 4, Y],
     [960.5, 484.5, 5, Y], [961.5, 525, 4, T], [961.5, 553.5, 5, T], [956.5, 384.5, 3, T], [492.5, 624.5, 4, T]].forEach(c => circle(...c));
    out.push(`<path d="M945 596l4-3 5 4-3 3zM958 606l3-3 5 4-3 4z" fill="${T}"/>`);
    out.push(`<path d="M936 414l6-6 3 3-6 6z" fill="${Y}" stroke="${W}"/>`);
    box(948.5, 352.5, 4, 11);
    rect(949, 359, 3, 4, T);
    box(956.5, 347.5, 4, 11);
    rect(957, 348, 3, 3, T);
    rect(928, 337, 7, 7, Y);
    [[965, 428.5], [963.5, 539.5]].forEach(([x, y]) => {
        out.push(`<ellipse cx="${x}" cy="${y}" rx="8" ry="3.5" fill="${G}"/>`);
        out.push(`<path d="M${x - 3} ${y - 1}l3-2 3 2-3 3z" fill="#fff"/>`);
    });

    // back side: J3503
    box(984.5, 420.5, 177, 141);
    [[1003, 420, 15, 9, G], [1142, 420, 18, 9, G], [1038, 439, 5, 7, Y], [1088, 439, 5, 4, T], [1134, 440, 4, 6, T], [996, 462, 5, 5, Y], [1016, 461, 5, 6, Y], [1036, 461, 6, 6, Y],
     [1060, 465, 4, 4, T], [1076, 467, 6, 4, Y], [1096, 466, 6, 5, Y], [1115, 465, 6, 5, Y], [993, 477, 5, 5, Y], [1001, 477, 5, 5, Y], [1009, 477, 5, 5, Y], [1022, 477, 5, 5, Y], [1032, 477, 5, 5, Y],
     [1040, 478, 4, 5, Y], [993, 484, 4, 6, G], [1001, 485, 5, 5, G], [1009, 485, 5, 5, Y], [1022, 485, 5, 5, Y], [1032, 485, 4, 5, Y], [1040, 485, 4, 4, Y], [995, 500, 7, 6, G], [1037, 500, 5, 4, Y],
     [1070, 481, 4, 4, G], [1077, 483, 4, 3, Y], [1093, 481, 4, 4, Y], [1115, 481, 4, 4, Y], [1060, 497, 4, 4, T], [1078, 496, 4, 5, G], [1096, 496, 4, 5, Y], [1115, 497, 6, 4, Y],
     [1156, 475, 5, 9, Y], [1038, 522, 5, 6, Y], [1089, 524, 4, 4, T], [1134, 522, 5, 6, T], [1156, 516, 5, 19, G], [1156, 538, 5, 11, G], [984, 547, 10, 14, T], [999, 550, 16, 8, G],
     [1059, 550, 19, 9, G], [1123, 550, 16, 9, G]].forEach(r => rect(...r));
    circle(1150.5, 509.5, 3, G);
    label(1072, 490, 44, 'J3503');
    circle(1151.5, 501.5, 5, '#fff');

    // back side: bare pads
    [[1129, 326, 9, 20, G], [1147, 327, 20, 9, Y], [1147, 341, 20, 8, Y], [1147, 354, 20, 9, Y], [1129, 359, 8, 19, Y], [1409, 337, 19, 9, G], [1374, 363, 8, 19, G],
     [1417, 599, 8, 20, Y], [1430, 599, 8, 20, G], [1443, 599, 9, 20, Y], [1456, 599, 9, 20, Y]].forEach(r => rect(...r));

    [[1025, 387, 6, 6], [1136, 408, 12, 2], [1150, 391, 3, 20], [1189, 388, 14, 2], [1230, 388, 40, 2], [1170, 407, 2, 60], [1445, 335, 14, 9], [1387, 360, 8, 42],
     [1175, 500, 28, 6], [1173, 508, 6, 18], [1240, 500, 14, 5], [1173, 555, 5, 44], [1176, 607, 20, 3], [1217, 607, 8, 4], [1240, 606, 38, 5],
     [1268, 423, 10, 20], [1268, 447, 10, 6], [1268, 459, 10, 20], [1268, 486, 6, 12], [1349, 412, 12, 8], [1366, 415, 9, 60], [1358, 427, 10, 6], [1316, 428, 24, 7], [1287, 430, 12, 4],
     [1308, 440, 5, 25], [1360, 438, 10, 34], [1317, 482, 44, 2], [1300, 491, 20, 2], [1371, 492, 2, 8], [1370, 540, 4, 20], [1370, 570, 4, 12], [1310, 615, 26, 2],
     [1002, 585, 10, 6], [1000, 593, 10, 16], [1005, 614, 4, 8], [1020, 590, 6, 12], [1034, 585, 16, 10], [1035, 596, 10, 6], [1054, 610, 40, 5], [1060, 624, 24, 2], [1099, 577, 14, 12],
     [1099, 594, 3, 20], [1100, 620, 22, 3], [1126, 569, 8, 8], [1133, 579, 4, 16], [1190, 616, 10, 7]].forEach(([x, y, w, h]) => cluster(x + 0.5, y + 0.5, w, h));

    [[1016.5, 568.5, 5, 10, 'YG'], [1024.5, 568.5, 6, 15, 'YG'], [1034.5, 568.5, 6, 15, 'YY'], [1043.5, 568.5, 6, 15, 'YY'], [1052.5, 568.5, 6, 15, 'YY'], [1099.5, 568.5, 7, 15, 'YY'], [1108.5, 568.5, 7, 15, 'YY'],
     [1117.5, 568.5, 7, 15, 'YY'], [1124.5, 584.5, 7, 16, 'YG'], [1053.5, 593.5, 6, 15, 'YG'], [1045.5, 585.5, 15, 6, 'GY'], [1104.5, 595.5, 17, 22, 'YY'], [1138.5, 579.5, 14, 17, 'YY', 'v'],
     [1140.5, 570.5, 14, 7, 'GY'], [1171.5, 616.5, 15, 7, 'GY'], [1188.5, 614.5, 5, 10, 'YG'], [1134.5, 391.5, 11, 16, 'YY', 'v'], [1290.5, 444.5, 15, 7, 'YG'],
     [1295.5, 427.5, 5, 10, 'GG'], [1303.5, 458.5, 10, 5, 'GY'], [1303.5, 479.5, 10, 5, 'GY'], [1364.5, 474.5, 4, 9, 'YG'], [1370.5, 474.5, 4, 9, 'YG']].forEach(p => part(...p));
    box(1024.5, 394.5, 12, 14, GR);
    rect(1031, 394, 5, 4, G);
    rect(1031, 405, 5, 3, G);
    rect(1025, 405, 4, 3, Y);

    bga(1061.5, 568.5, 35, 39, 4, 2);
    bga(1193.5, 418.5, 56, 55, 4, 1.5,
        (i, j, nx) => i < 3 ? G : j < 3 && i < 9 ? T : i > nx - 3 ? (rnd() > 0.5 ? G : T) : Y,
        (i, j) => (i === 4 || i === 10) && j > 3 && j < 10 || j === 8 && i > 5 && i < 9);
    bga(1181.5, 508.5, 96, 96, 4, 2);
    bga(1316.5, 441.5, 43, 37, 4, 2);
    bga(1290.5, 498.5, 73, 112, 5.2, 1.5,
        i => i % 3 === 2 ? G : rnd() < 0.12 ? T : Y,
        (i, j) => (i > 5 && i < 8) || (j > 9 && j < 12));
    box(1012.5, 592.5, 13, 12, GR);
    rect(1015, 595, 3, 3, Y);
    rect(1020, 599, 3, 3, Y);
    box(1341.5, 421.5, 17, 13, GR);
    rect(1346, 422, 8, 12, G);
    label(1220, 446, 10, 'U1601');
    label(1229, 556, 25, 'U301');
    label(1328, 554, 23, 'U1501', true);
    label(1337, 460, 9, 'U7001');
    label(1079, 588, 8, 'U1001', true);

    // probe markers
    [[761.5, 337.5], [809.5, 371.5], [784.5, 430.5], [757.5, 470.5], [852.5, 449.5], [647.5, 484.5], [653.5, 551.5], [573.5, 598.5], [590.5, 600.5], [677.5, 600.5], [613.5, 609.5], [677.5, 616.5],
     [633.5, 623.5], [636.5, 623.5], [693.5, 626.5], [932.5, 341.5], [816.5, 510.5], [801.5, 516.5], [790.5, 540.5], [806.5, 542.5], [783.5, 563.5], [812.5, 563.5], [783.5, 587.5], [877.5, 510.5],
     [876.5, 564.5], [931.5, 491.5], [917.5, 507.5], [925.5, 549.5], [894.5, 605.5], [900.5, 605.5], [869.5, 620.5], [1027.5, 396.5], [1140.5, 399.5], [1079.5, 588.5], [1106.5, 586.5], [1113.5, 614.5],
     [1140.5, 587.5], [1148.5, 587.5], [1214.5, 532.5], [1338.5, 459.5], [1421.5, 609.5], [1447.5, 609.5], [1461.5, 609.5]].forEach(([x, y]) => circle(x, y, 2.6, B));

    document.getElementById('board').innerHTML = out.join('');
</script>
</body>
</html>
